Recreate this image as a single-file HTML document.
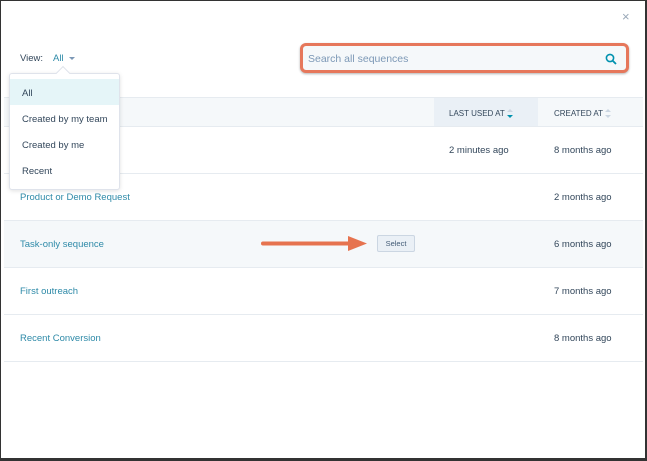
<!DOCTYPE html>
<html><head><style>
*{margin:0;padding:0;box-sizing:border-box}
body{width:647px;height:461px;background:#fff;font-family:"Liberation Sans",sans-serif;position:relative;overflow:hidden;color:#33475b}
.frame{position:absolute;left:0;top:0;width:647px;height:461px;border:1px solid #333;border-right-width:2px;border-bottom-width:3px;pointer-events:none;z-index:10}
.abs{position:absolute}
.link{color:#2e8aa8;font-size:9.5px}
.t{font-size:9.5px;color:#33475b}
.row{position:absolute;left:4px;width:639px;border-bottom:1px solid #e6ebf0}
</style></head><body>
<div class="frame"></div>
<div class="abs" style="left:622px;top:9px;font-size:13px;color:#99a8b8">×</div>
<div class="abs t" style="left:20px;top:53px">View:</div>
<div class="abs link" style="left:53px;top:53px">All</div>
<div class="abs" style="left:69px;top:57px;border:3px solid transparent;border-top:3px solid #7c98b6"></div>
<div class="abs" style="left:300px;top:43px;width:329px;height:30px;border:3px solid #e6775b;border-radius:6px;background:#f5f8fa;box-shadow:0 1px 2px rgba(0,0,0,.3)"></div>
<div class="abs" style="left:308px;top:53px;font-size:10.5px;color:#7c98b6">Search all sequences</div>
<svg class="abs" style="left:605px;top:53px" width="12" height="12" viewBox="0 0 12 12"><circle cx="5" cy="5" r="3.6" fill="none" stroke="#0091ae" stroke-width="1.6"/><path d="M7.6 7.6L11 11" stroke="#0091ae" stroke-width="1.8"/></svg>
<div class="row" style="top:97px;height:30px;background:#f5f8fa;border-top:1px solid #e6ebf0"></div>
<div class="abs" style="left:434px;top:98px;width:104px;height:28px;background:#eaf0f6"></div>
<div class="abs" style="left:449px;top:109px;font-size:8px;color:#33475b">LAST USED AT</div>
<svg class="abs" style="left:507px;top:108px" width="6" height="12"><path d="M0 4L3 1L6 4z" fill="#cbd6e2"/><path d="M0 7L3 10L6 7z" fill="#0091ae"/></svg>
<div class="abs" style="left:554px;top:109px;font-size:8px;color:#33475b">CREATED AT</div>
<svg class="abs" style="left:605px;top:108px" width="6" height="12"><path d="M0 4L3 1L6 4z" fill="#cbd6e2"/><path d="M0 7L3 10L6 7z" fill="#cbd6e2"/></svg>
<div class="row" style="top:127px;height:47px"></div>
<div class="abs t" style="left:449px;top:145px">2 minutes ago</div>
<div class="abs t" style="left:554px;top:145px">8 months ago</div>
<div class="row" style="top:174px;height:47px"></div>
<div class="abs link" style="left:20px;top:192px">Product or Demo Request</div>
<div class="abs t" style="left:554px;top:192px">2 months ago</div>
<div class="row" style="top:221px;height:47px;background:#f5f8fa"></div>
<div class="abs link" style="left:20px;top:239px">Task-only sequence</div>
<div class="abs t" style="left:554px;top:239px">6 months ago</div>
<svg class="abs" style="left:260px;top:234px" width="110" height="18"><path d="M3 9.5H92" stroke="#e6734f" stroke-width="4" stroke-linecap="round"/><path d="M88 2L107 9.5L88 17z" fill="#e6734f"/></svg>
<div class="abs" style="left:377px;top:235px;width:38px;height:17px;border:1px solid #cbd6e2;border-radius:2px;background:#eaf0f6;font-size:7.5px;text-align:center;line-height:15px;color:#425b76">Select</div>
<div class="row" style="top:268px;height:47px"></div>
<div class="abs link" style="left:20px;top:286px">First outreach</div>
<div class="abs t" style="left:554px;top:286px">7 months ago</div>
<div class="row" style="top:315px;height:47px"></div>
<div class="abs link" style="left:20px;top:333px">Recent Conversion</div>
<div class="abs t" style="left:554px;top:333px">8 months ago</div>
<div class="abs" style="left:9px;top:73px;width:111px;height:117px;background:#fff;border:1px solid #dfe3eb;border-radius:3px;box-shadow:0 1px 4px rgba(0,0,0,.12)"></div>
<div class="abs" style="left:58px;top:68px;width:10px;height:10px;background:#fff;border-left:1px solid #dfe3eb;border-top:1px solid #dfe3eb;transform:rotate(45deg)"></div>
<div class="abs" style="left:10px;top:79px;width:109px;height:26px;background:#e5f5f8"></div>
<div class="abs t" style="left:22px;top:88px">All</div>
<div class="abs t" style="left:22px;top:114px">Created by my team</div>
<div class="abs t" style="left:22px;top:140px">Created by me</div>
<div class="abs t" style="left:22px;top:166px">Recent</div>
</body></html>
